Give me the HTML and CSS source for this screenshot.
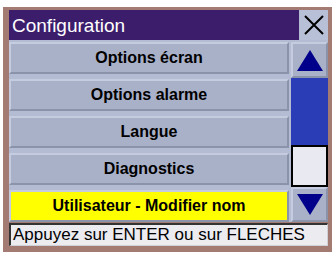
FILE: index.html
```html
<!DOCTYPE html>
<html>
<head>
<meta charset="utf-8">
<link rel="stylesheet" href="styles.css">
</head>
<body>
<div class="frame">
  <div class="titlerow">
    <div class="title">Configuration</div>
    <div class="close">
      <svg width="22" height="22" viewBox="0 0 22 22"><path d="M2 2 L20 20 M20 2 L2 20" stroke="#000" stroke-width="2" fill="none"/></svg>
    </div>
  </div>
  <div class="main">
    <div class="list">
      <div class="btn">Options écran</div>
      <div class="btn">Options alarme</div>
      <div class="btn">Langue</div>
      <div class="btn">Diagnostics</div>
      <div class="btn sel">Utilisateur - Modifier nom</div>
    </div>
    <div class="scroll">
      <div class="arrow up"><svg width="26" height="21" viewBox="0 0 26 21"><path d="M13 0 L26 21 L0 21 Z" fill="#00008a"/></svg></div>
      <div class="thumb"></div>
      <div class="track"></div>
      <div class="arrow down"><svg width="26" height="21" viewBox="0 0 26 21"><path d="M0 0 L26 0 L13 21 Z" fill="#00008a"/></svg></div>
    </div>
  </div>
  <div class="status">Appuyez sur ENTER ou sur FLECHES</div>
</div>
</body>
</html>
```
FILE: styles.css
```css
html, body { margin: 0; padding: 0; background: #ffffff; }
body { font-family: "Liberation Sans", Arial, sans-serif; }
.frame {
  margin: 7px 2px 3px 3px;
  padding: 3px 4px 6px 6px;
  background: #a37b72;
  display: flex;
  flex-direction: column;
}
.titlerow { display: flex; height: 30px; background: #b4bcd4; }
.title {
  flex: 1;
  background: #3c1d6c;
  color: #ffffff;
  font-size: 19px;
  line-height: 30px;
  padding-left: 3px;
  padding-top: 1px;
  box-sizing: border-box;
}
.close {
  width: 28px;
  margin-left: 1px;
  background: #b8c0d8;
  display: flex;
  align-items: center;
  justify-content: center;
}
.main { display: flex; height: 182px; background: #b4bcd4; }
.list {
  flex: 1;
  display: flex;
  flex-direction: column;
  gap: 5px;
  padding-top: 2px;
}
.btn {
  height: 32px;
  box-sizing: border-box;
  background: #a9b1c9;
  border-top: 2px solid #c6cce0;
  border-left: 2px solid #c6cce0;
  border-bottom: 2px solid #8b93ab;
  border-right: 2px solid #8b93ab;
  display: flex;
  align-items: center;
  justify-content: center;
  font-weight: bold;
  font-size: 16px;
  color: #000;
}
.btn.sel { background: #ffff00; }
.scroll {
  width: 37px;
  margin-left: 2px;
  padding-top: 2px;
  display: flex;
  flex-direction: column;
}
.arrow {
  box-sizing: border-box;
  background: #a9b1c9;
  border-top: 2px solid #c6cce0;
  border-left: 2px solid #c6cce0;
  border-bottom: 2px solid #8b93ab;
  border-right: 2px solid #8b93ab;
  display: flex;
  align-items: center;
  justify-content: center;
}
.arrow.up { height: 36px; }
.arrow.down { height: 35px; }
.thumb { height: 67px; background: #2a3db6; }
.track {
  height: 42px;
  box-sizing: border-box;
  background: #e9e9f1;
  border: 2px solid #000;
}
.status {
  margin-top: 1px;
  height: 23px;
  box-sizing: border-box;
  background: #ebebf0;
  border-top: 2px solid #333;
  border-left: 2px solid #333;
  border-bottom: 1px solid #d0d0d8;
  border-right: 1px solid #d0d0d8;
  font-size: 17px;
  line-height: 20px;
  padding-left: 2px;
  color: #000;
  white-space: nowrap;
}
```
